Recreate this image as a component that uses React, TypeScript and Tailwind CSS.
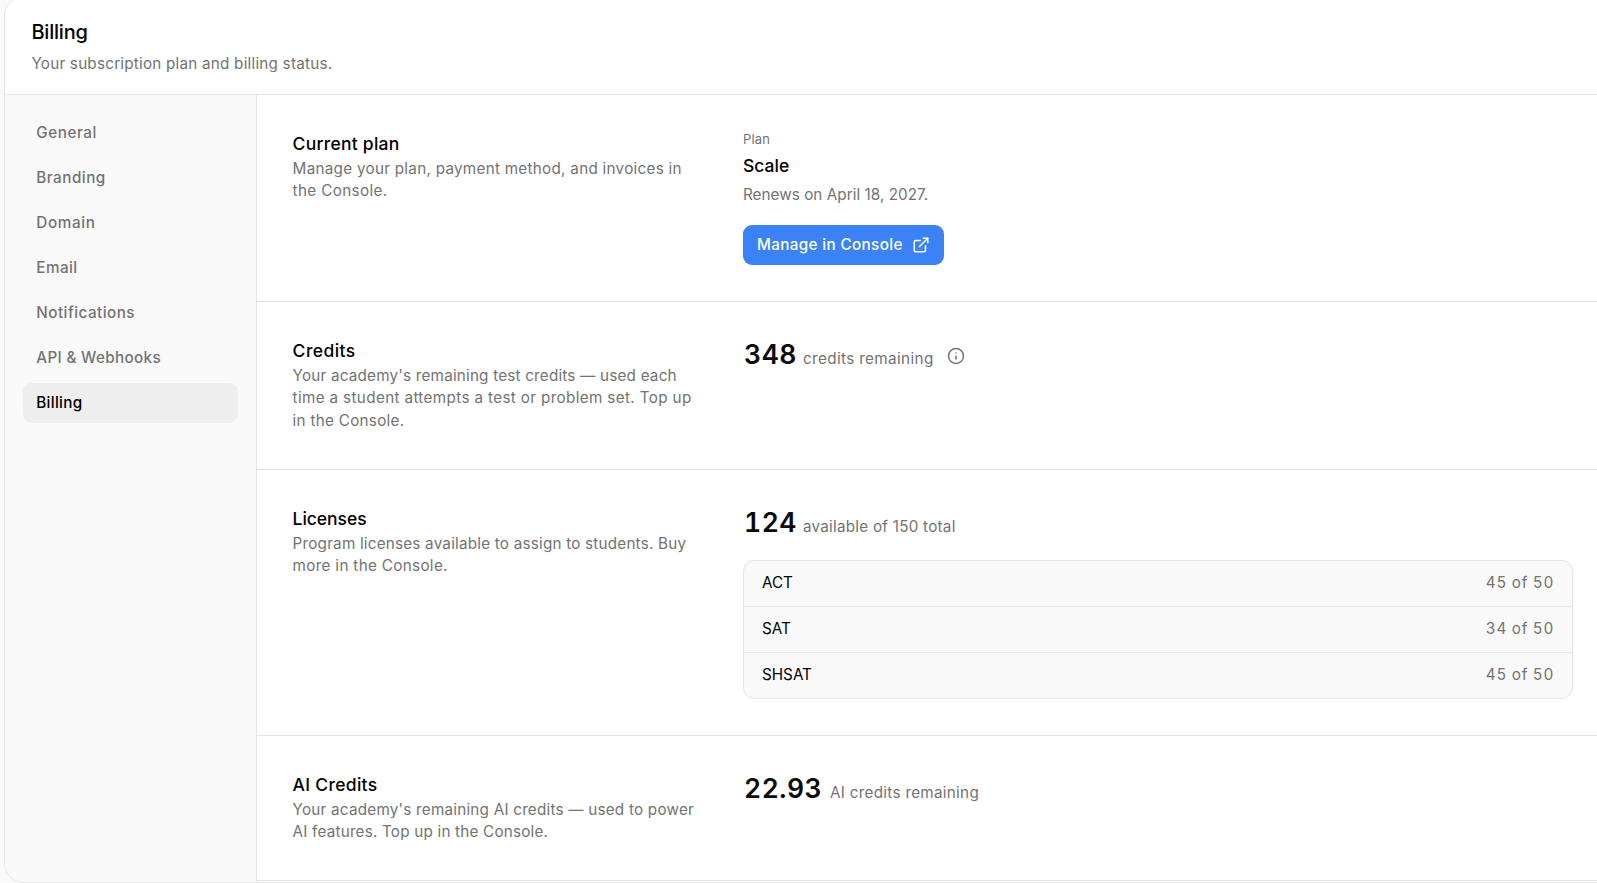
import React, { useState } from "react";
import { ExternalLink, Info } from "lucide-react";

const navItems = [
  { label: "General", tracking: "tracking-[0.55px]" },
  { label: "Branding", tracking: "tracking-[0.48px]" },
  { label: "Domain", tracking: "tracking-[0.65px]" },
  { label: "Email", tracking: "tracking-[0.45px]" },
  { label: "Notifications", tracking: "tracking-[0.46px]" },
  { label: "API & Webhooks", tracking: "tracking-[0.33px]" },
  { label: "Billing", tracking: "tracking-[0.3px]" },
];

const licenses = [
  { name: "ACT", available: 45, total: 50 },
  { name: "SAT", available: 34, total: 50 },
  { name: "SHSAT", available: 45, total: 50 },
];

type Line = { text: string; tracking: string };

type SectionProps = {
  title: string;
  titleTracking: string;
  lines: Line[];
  className: string;
  children: React.ReactNode;
};

function Section({
  title,
  titleTracking,
  lines,
  className,
  children,
}: SectionProps) {
  return (
    <section
      className={`grid grid-cols-[450.4px_1fr] border-b border-[#e5e5e5] pt-[35px] pr-6 pl-[35.6px] ${className}`}
    >
      <div>
        <h2
          className={`text-[17.5px] leading-[27px] font-medium text-black ${titleTracking}`}
        >
          {title}
        </h2>
        <p className="mt-px text-[15.25px] leading-[22.4px] text-[#737373]">
          {lines.map((line) => (
            <span
              key={line.text}
              className={`block whitespace-nowrap ${line.tracking}`}
            >
              {line.text}
            </span>
          ))}
        </p>
      </div>
      <div>{children}</div>
    </section>
  );
}

type StatProps = {
  value: string;
  width: string;
  label: string;
  tracking: string;
  children?: React.ReactNode;
};

function Stat({ value, width, label, tracking, children }: StatProps) {
  return (
    <div className="flex h-[37px] items-baseline whitespace-nowrap">
      <span
        className={`pl-px text-[26.5px] leading-[34px] font-semibold tracking-[0.5px] text-[#0a0a0a] tabular-nums ${width}`}
      >
        {value}
      </span>
      <span className={`text-[15.25px] text-[#737373] ${tracking}`}>
        {label}
      </span>
      {children}
    </div>
  );
}

export default function App() {
  const [active, setActive] = useState("Billing");

  return (
    <div className="h-[883px] overflow-hidden bg-[#fafafa] pl-1 font-['Inter','Liberation_Sans',sans-serif]">
      <div className="-mt-1 mr-[-30px] flex h-[887px] flex-col overflow-hidden rounded-[20px] border border-[#e5e5e5] bg-white">
        {/* Header */}
        <header className="h-[98px] shrink-0 border-b border-[#e5e5e5] pt-[21px] pl-[26.4px]">
          <h1 className="text-[20px] leading-[29px] font-medium tracking-[-0.2px] text-black">
            Billing
          </h1>
          <p className="mt-[5px] text-[15.25px] leading-[23px] tracking-[0.22px] text-[#737373]">
            Your subscription plan and billing status.
          </p>
        </header>

        <div className="flex min-h-0 flex-1">
          {/* Settings navigation */}
          <nav className="flex w-[252px] shrink-0 flex-col gap-[5px] border-r border-[#e5e5e5] bg-[#f9f9f9] px-[18px] pt-[18px]">
            {navItems.map((item) => (
              <button
                key={item.label}
                onClick={() => setActive(item.label)}
                className={`h-10 rounded-[9px] px-[13.3px] text-left text-[15.25px] font-medium whitespace-nowrap ${item.tracking} ${
                  active === item.label
                    ? "bg-[#eeeeee] text-black"
                    : "text-[#737373]"
                }`}
              >
                {item.label}
              </button>
            ))}
          </nav>

          <main className="mr-[29px] min-w-0 flex-1">
            <Section
              title="Current plan"
              titleTracking="tracking-[0.25px]"
              lines={[
                {
                  text: "Manage your plan, payment method, and invoices in",
                  tracking: "tracking-[0.27px]",
                },
                { text: "the Console.", tracking: "tracking-[0.35px]" },
              ]}
              className="h-[207px]"
            >
              <p className="text-[13px] leading-[18px] tracking-[0.2px] text-[#737373]">
                Plan
              </p>
              <p className="mt-1 text-[17.5px] leading-[27px] font-medium text-black">
                Scale
              </p>
              <p className="mt-1 text-[15.25px] leading-[23px] tracking-[0.04px] text-[#737373]">
                Renews on April 18, 2027.
              </p>
              <button className="mt-[19px] flex h-10 w-[201px] items-center justify-between rounded-[9px] bg-[#3b82f6] px-3.5 text-[15.25px] font-medium tracking-[0.35px] whitespace-nowrap text-white">
                Manage in Console
                <ExternalLink className="size-[18px]" strokeWidth={2} />
              </button>
            </Section>

            <Section
              title="Credits"
              titleTracking="tracking-[0.45px]"
              lines={[
                {
                  text: "Your academy's remaining test credits — used each",
                  tracking: "tracking-[0.2px]",
                },
                {
                  text: "time a student attempts a test or problem set. Top up",
                  tracking: "tracking-[0.35px]",
                },
                { text: "in the Console.", tracking: "tracking-[0.28px]" },
              ]}
              className="h-[168px]"
            >
              <Stat
                value="348"
                width="w-[60px]"
                label="credits remaining"
                tracking="tracking-[0.37px]"
              >
                <Info
                  className="ml-[13px] size-[18px] self-center text-[#737373]"
                  strokeWidth={2}
                />
              </Stat>
            </Section>

            <Section
              title="Licenses"
              titleTracking="tracking-[-0.05px]"
              lines={[
                {
                  text: "Program licenses available to assign to students. Buy",
                  tracking: "tracking-[0.21px]",
                },
                { text: "more in the Console.", tracking: "tracking-[0.32px]" },
              ]}
              className="h-[266px]"
            >
              <Stat
                value="124"
                width="w-[60px]"
                label="available of 150 total"
                tracking="tracking-[0.24px]"
              />
              <ul className="mt-[18px] divide-y divide-[#e5e5e5] overflow-hidden rounded-[11px] border border-[#e5e5e5] bg-[#f9f9f9] text-[15.25px]">
                {licenses.map((license) => (
                  <li
                    key={license.name}
                    className="flex h-[46px] items-center justify-between px-[18px] last:h-[45px]"
                  >
                    <span className="text-black">{license.name}</span>
                    <span className="tracking-[0.7px] text-[#737373] tabular-nums">
                      {license.available} of {license.total}
                    </span>
                  </li>
                ))}
              </ul>
            </Section>

            <Section
              title="AI Credits"
              titleTracking="tracking-[0.3px]"
              lines={[
                {
                  text: "Your academy's remaining AI credits — used to power",
                  tracking: "tracking-[0.22px]",
                },
                {
                  text: "AI features. Top up in the Console.",
                  tracking: "tracking-[0.2px]",
                },
              ]}
              className="h-[145px]"
            >
              <Stat
                value="22.93"
                width="w-[87px]"
                label="AI credits remaining"
                tracking="tracking-[0.29px]"
              />
            </Section>
          </main>
        </div>
      </div>
    </div>
  );
}
